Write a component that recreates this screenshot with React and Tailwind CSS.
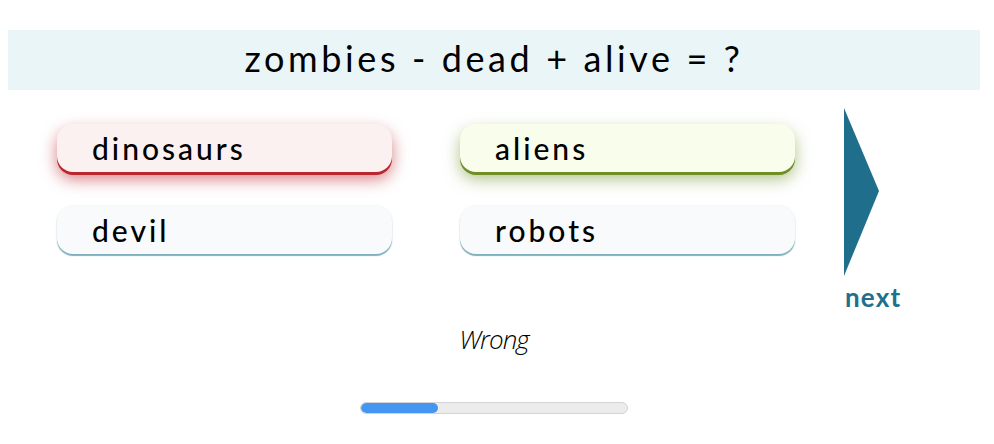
const answers = [
  { label: 'dinosaurs', state: 'wrong' },
  { label: 'aliens', state: 'right' },
  { label: 'devil', state: 'idle' },
  { label: 'robots', state: 'idle' },
];

const cardStyles = {
  wrong: 'bg-[#fbf1f1] shadow-[0_3px_0_#b8262e,0_7px_16px_rgba(190,40,48,0.6)]',
  right: 'bg-[#f9fdeb] shadow-[0_3px_0_#6f8e25,0_7px_16px_rgba(110,142,37,0.55)]',
  idle: 'bg-[#f8fafb] shadow-[0_2px_1px_#7fb0bd,0_0_3px_rgba(0,0,0,0.08)]',
};

const App = () => {
  return (
    <div className="w-[994px] h-[444px] bg-white pt-[30px] font-['Lato',sans-serif] text-black">
      {/* Question */}
      <div className="mx-2 w-[972px] h-[60px] bg-[#eaf5f8] flex items-center justify-center">
        <h1 className="text-[36px] tracking-[3.6px] leading-none pb-1">zombies - dead + alive = ?</h1>
      </div>

      {/* Answers + next */}
      <div className="flex mt-[18px]">
        <div className="grid grid-cols-[335px_335px] gap-x-[68px] gap-y-[34px] ml-[57px] mt-[16px] h-fit">
          {answers.map((a) => (
            <div
              key={a.label}
              className={`h-12 rounded-2xl flex items-center pl-[35px] text-[30px] font-medium tracking-[3px] ${cardStyles[a.state]}`}
            >
              {a.label}
            </div>
          ))}
        </div>

        <div className="ml-[49px] flex flex-col items-start">
          <svg width="35" height="168" viewBox="0 0 35 168">
            <polygon points="0,0 35,83 0,168" fill="#1e6e8c" />
          </svg>
          <span className="text-[26px] font-bold text-[#20708c] leading-none mt-[8px] ml-[1px] tracking-[1.2px]">next</span>
        </div>
      </div>

      {/* Feedback */}
      <p className="text-center text-[26px] italic font-light mt-[10px] pr-[6px] font-['Open_Sans',sans-serif] tracking-[-1px]">Wrong</p>

      {/* Progress */}
      <div className="w-[268px] h-3 ml-[360px] mt-[43px] rounded-full bg-[#ececec] border border-[#d4d4d4] overflow-hidden">
        <div className="h-full bg-[#4596f2] rounded-full" style={{ width: '29%' }} />
      </div>
    </div>
  );
};

export default App;
